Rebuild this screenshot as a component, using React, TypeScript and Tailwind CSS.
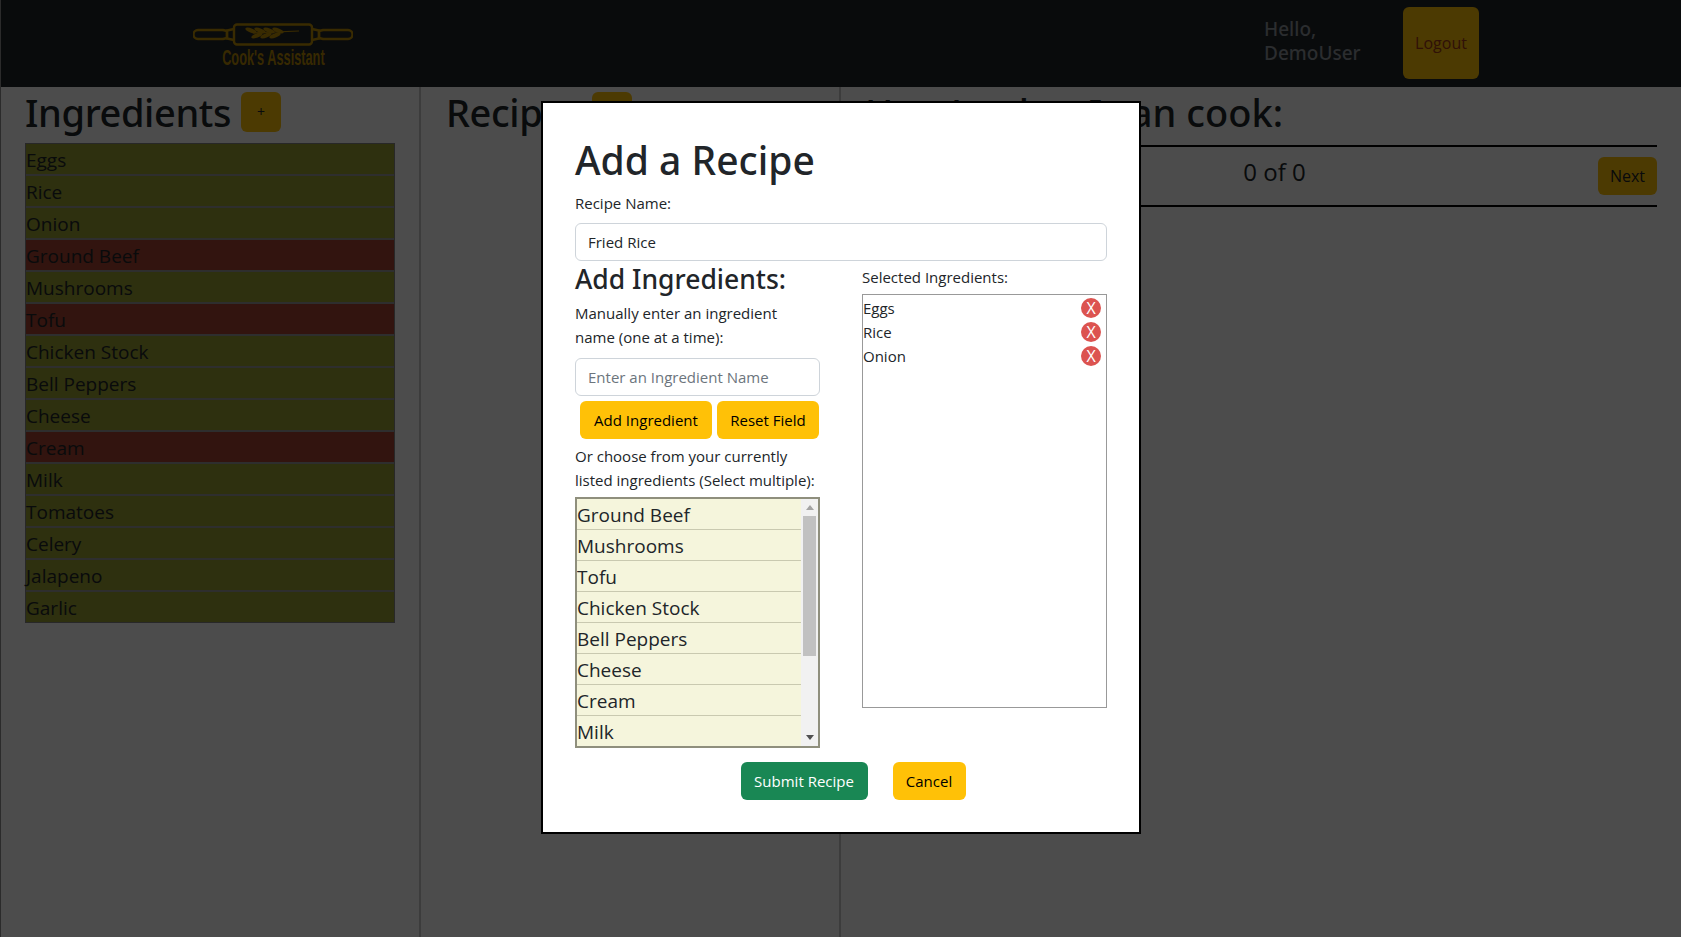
const ingredients: Array<{ name: string; have: boolean }> = [
    { name: "Eggs", have: true },
    { name: "Rice", have: true },
    { name: "Onion", have: true },
    { name: "Ground Beef", have: false },
    { name: "Mushrooms", have: true },
    { name: "Tofu", have: false },
    { name: "Chicken Stock", have: true },
    { name: "Bell Peppers", have: true },
    { name: "Cheese", have: true },
    { name: "Cream", have: false },
    { name: "Milk", have: true },
    { name: "Tomatoes", have: true },
    { name: "Celery", have: true },
    { name: "Jalapeno", have: true },
    { name: "Garlic", have: true },
];

const choices = ["Ground Beef", "Mushrooms", "Tofu", "Chicken Stock", "Bell Peppers", "Cheese", "Cream", "Milk"];
const selected = ["Eggs", "Rice", "Onion"];

const upperLeaves = [58, 67, 76, 85];
const lowerLeaves = [64, 73, 82];

function Logo() {
    return (
        <div className="flex flex-col items-center w-[160px] pt-[6px]">
            <svg width="160" height="23" viewBox="0 0 160 23" fill="none" stroke="#c09005" strokeWidth="2.4">
                <rect x="41" y="1.5" width="78" height="20" rx="3" />
                <path d="M41 6 L34 7.5 V15.5 L41 17 M119 6 L126 7.5 V15.5 L119 17" />
                <path d="M30 7 H5 a4.5 4.5 0 0 0 0 9 H30 L34 15 V8 Z M130 7 H155 a4.5 4.5 0 0 1 0 9 H130 L126 15 V8 Z" />
                <path d="M60 10 L106 8" strokeWidth="1.2" />
                {upperLeaves.map((x) => (
                    <ellipse key={x} cx={x} cy="7.5" rx="6" ry="2.2" fill="#c09005" stroke="none" transform={`rotate(20 ${x} 7.5)`} />
                ))}
                {lowerLeaves.map((x) => (
                    <ellipse key={x} cx={x} cy="12.5" rx="6" ry="2.2" fill="#c09005" stroke="none" transform={`rotate(-20 ${x} 12.5)`} />
                ))}
            </svg>
            <span className="text-[22px] leading-[24px] font-bold whitespace-nowrap scale-x-[0.58] text-[#b88a05] font-['Liberation_Sans',sans-serif]">
                Cook's Assistant
            </span>
        </div>
    );
}

function Navbar() {
    return (
        <nav className="h-[87px] bg-[#212529] flex items-center">
            <div className="ml-[192px]">
                <Logo />
            </div>
            <div className="ml-[911px] w-[139px] mb-[6px] text-[19px] leading-[24px] font-medium text-[#8f969d] font-['Noto_Sans',sans-serif]">
                Hello,
                <br />
                DemoUser
            </div>
            <button className="w-[76px] h-[72px] mb-[1px] rounded-md bg-[#ffc107] text-[#a0391a] text-base">Logout</button>
        </nav>
    );
}

function ColumnTitle({ title }: { title: string }) {
    return (
        <div className="flex items-center gap-[10px] h-[40px]">
            <h2 className="text-[38px] leading-[42px] tracking-[-0.4px] font-medium text-[#212529] font-['Noto_Sans',sans-serif]">{title}</h2>
            <button className="w-[40px] h-[40px] rounded-md bg-[#ffc107] text-[#212529] text-sm">+</button>
        </div>
    );
}

function IngredientsColumn() {
    return (
        <section className="w-[420px] border-r-2 border-[#c8c8c8] pl-[24px] pr-[24px] pt-[5px]">
            <ColumnTitle title="Ingredients" />
            <ul className="mt-[11px] w-[370px] border border-[#888]">
                {ingredients.map((item) => (
                    <li
                        key={item.name}
                        className={`h-[32px] last:h-[30px] leading-[32px] text-[19px] border-b-2 border-[#999] last:border-b-0 text-[#212529] ${
                            item.have ? "bg-[#9aa032]" : "bg-[#a74332]"
                        }`}
                    >
                        {item.name}
                    </li>
                ))}
            </ul>
        </section>
    );
}

function RecipesColumn() {
    return (
        <section className="w-[420px] border-r-2 border-[#c8c8c8] pl-[25px] pt-[5px]">
            <ColumnTitle title="Recipes" />
        </section>
    );
}

function CookColumn() {
    return (
        <section className="flex-1 pl-[24px] pr-[24px] pt-[5px]">
            <h2 className="text-[38px] leading-[40px] font-medium text-[#212529] h-[40px] whitespace-nowrap font-['Noto_Sans',sans-serif]">
                Here's what I can cook:
            </h2>
            <div className="mt-[13px] h-[62px] border-y-2 border-black flex items-center justify-between">
                <button className="w-[86px] h-[38px] rounded-md bg-[#ffc107] text-[#212529] text-base">Previous</button>
                <span className="text-[24px] mb-[8px] text-[#212529]">0 of 0</span>
                <button className="w-[59px] h-[38px] rounded-md bg-[#ffc107] text-[#212529] text-base">Next</button>
            </div>
        </section>
    );
}

function AddRecipeModal() {
    return (
        <div className="absolute inset-0 bg-black/70">
            <div className="absolute left-[540px] top-[101px] w-[600px] h-[733px] bg-white border-[2px] border-black px-[32px] pt-[33px] text-[#212529]">
                <h1 className="text-[39px] leading-[48px] font-medium font-['Noto_Sans',sans-serif]">Add a Recipe</h1>
                <label className="block mt-[7px] text-[15px] leading-[24px]">Recipe Name:</label>
                <input
                    readOnly
                    value="Fried Rice"
                    className="block mt-[8px] w-full h-[38px] rounded-md border border-[#ced4da] px-[12px] text-[15px] outline-none"
                />
                <div className="flex justify-between">
                    <div className="w-[245px]">
                        <h3 className="text-[26.5px] leading-[36px] font-medium font-['Noto_Sans',sans-serif]">Add Ingredients:</h3>
                        <p className="mt-[4px] text-[15px] leading-[24px]">
                            Manually enter an ingredient name (one at a time):
                        </p>
                        <input
                            readOnly
                            placeholder="Enter an Ingredient Name"
                            className="block mt-[9px] w-full h-[38px] rounded-md border border-[#ced4da] px-[12px] text-[15px] outline-none placeholder:text-[#6c757d]"
                        />
                        <div className="flex gap-[5px] mt-[5px] pl-[5px]">
                            <button className="w-[132px] h-[38px] rounded-md bg-[#ffc107] text-[15px] text-black">Add Ingredient</button>
                            <button className="w-[102px] h-[38px] rounded-md bg-[#ffc107] text-[15px] text-black">Reset Field</button>
                        </div>
                        <p className="mt-[5px] text-[15px] leading-[24px]">
                            Or choose from your currently listed ingredients (Select multiple):
                        </p>
                        <div className="mt-[5px] h-[251px] border-2 border-[#8f8f7d] flex bg-[#f5f5dc] overflow-hidden">
                            <ul className="flex-1">
                                {choices.map((name) => (
                                    <li key={name} className="h-[31px] leading-[33px] text-[19px] border-b border-[#c9c9b0] last:border-b-0">
                                        {name}
                                    </li>
                                ))}
                            </ul>
                            <div className="w-[17px] bg-[#f1f1f1] flex flex-col items-center">
                                <div className="mt-[6px] h-[5px] w-0 border-x-[4px] border-x-transparent border-b-[5px] border-b-[#a3a3a3]" />
                                <div className="mt-[6px] w-[13px] h-[140px] bg-[#c1c1c1]" />
                                <div className="mt-auto mb-[6px] h-[5px] w-0 border-x-[4px] border-x-transparent border-t-[5px] border-t-[#505050]" />
                            </div>
                        </div>
                    </div>
                    <div className="w-[245px]">
                        <div className="mt-[4px] text-[15px] leading-[24px]">Selected Ingredients:</div>
                        <ul className="mt-[5px] h-[414px] border border-[#999] pr-[5px] pt-[1px]">
                            {selected.map((name) => (
                                <li key={name} className="flex items-center justify-between h-[24px] text-[15px]">
                                    {name}
                                    <span className="w-[20px] h-[20px] rounded-full bg-[#dc5350] text-white text-[16px] leading-[20px] text-center">X</span>
                                </li>
                            ))}
                        </ul>
                    </div>
                </div>
                <div className="flex justify-center gap-[25px] mt-[14px] pl-[24px]">
                    <button className="w-[127px] h-[38px] rounded-md bg-[#198754] text-white text-[15px]">Submit Recipe</button>
                    <button className="w-[73px] h-[38px] rounded-md bg-[#ffc107] text-black text-[15px]">Cancel</button>
                </div>
            </div>
        </div>
    );
}

export default function App() {
    return (
        <div className="relative h-[937px] overflow-hidden bg-white border-l border-[#2b2b2b] font-['Open_Sans','Noto_Sans',sans-serif]">
            <Navbar />
            <main className="flex h-[850px]">
                <IngredientsColumn />
                <RecipesColumn />
                <CookColumn />
            </main>
            <AddRecipeModal />
            <div className="absolute left-[-1px] bottom-0 w-[1px] h-[7px] bg-[#1c8fe0]" />
        </div>
    );
}
